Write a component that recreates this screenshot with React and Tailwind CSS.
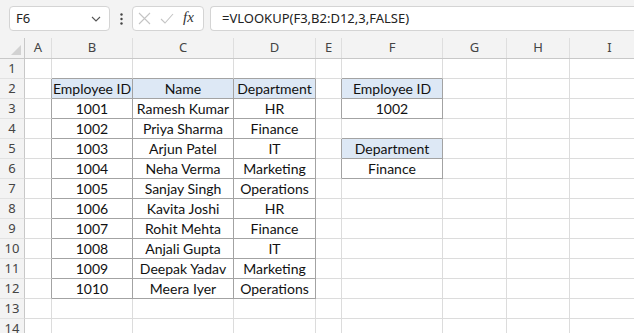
import React from 'react';

const colWidths = 'grid-cols-[25px_27px_81px_101px_82px_26px_101px_64px_63px_80px]';
const letters = ['A', 'B', 'C', 'D', 'E', 'F', 'G', 'H', 'I'];

const employees = [
    ['1001', 'Ramesh Kumar', 'HR'],
    ['1002', 'Priya Sharma', 'Finance'],
    ['1003', 'Arjun Patel', 'IT'],
    ['1004', 'Neha Verma', 'Marketing'],
    ['1005', 'Sanjay Singh', 'Operations'],
    ['1006', 'Kavita Joshi', 'HR'],
    ['1007', 'Rohit Mehta', 'Finance'],
    ['1008', 'Anjali Gupta', 'IT'],
    ['1009', 'Deepak Yadav', 'Marketing'],
    ['1010', 'Meera Iyer', 'Operations'],
];

const cells = {
    B2: 'Employee ID', C2: 'Name', D2: 'Department',
    F2: 'Employee ID', F3: '1002',
    F5: 'Department', F6: 'Finance',
};
employees.forEach((e, i) => {
    cells['B' + (i + 3)] = e[0];
    cells['C' + (i + 3)] = e[1];
    cells['D' + (i + 3)] = e[2];
});

const headerCells = ['B2', 'C2', 'D2', 'F2', 'F5'];

// c: 1 = A ... 9 = I
function inTable(c, r) {
    if (c >= 2 && c <= 4 && r >= 2 && r <= 12) return true;
    if (c === 6 && (r === 2 || r === 3 || r === 5 || r === 6)) return true;
    return false;
}

function Cell({ c, r }) {
    const key = letters[c - 1] + r;
    const darkRight = inTable(c, r) || inTable(c + 1, r);
    const darkBottom = inTable(c, r) || inTable(c, r + 1);
    const fill = headerCells.includes(key) ? 'bg-[#dde8f5]' : 'bg-white';
    return (
        <div
            className={`h-5 border-r border-b flex items-center justify-center overflow-hidden whitespace-nowrap text-[14px] text-[#111] ${fill} ${darkRight ? 'border-r-[#a3a3a3]' : 'border-r-[#dcdcdc]'} ${darkBottom ? 'border-b-[#a3a3a3]' : 'border-b-[#dcdcdc]'}`}
        >
            {cells[key]}
        </div>
    );
}

function Toolbar() {
    return (
        <div className="h-[38px] bg-[#f3f3f3] flex items-start pt-[6px] pl-[9px] gap-0 text-[13px] text-[#222]" style={{ fontFamily: '"Noto Sans", sans-serif' }}>
            <div className="w-[101px] h-[25px] bg-white border border-[#d4d4d4] rounded-[4px] flex items-center justify-between pl-[6px] pr-[8px]">
                <span>F6</span>
                <svg width="10" height="6" viewBox="0 0 10 6" fill="none" stroke="#555" strokeWidth="1.1">
                    <path d="M1 1 L5 5 L9 1" />
                </svg>
            </div>
            <div className="w-[22px] h-[25px] flex items-center justify-center">
                <svg width="3" height="12" viewBox="0 0 3 12" fill="#444">
                    <circle cx="1.5" cy="1.5" r="1.2" />
                    <circle cx="1.5" cy="6" r="1.2" />
                    <circle cx="1.5" cy="10.5" r="1.2" />
                </svg>
            </div>
            <div className="w-[72px] h-[25px] bg-white border border-[#d4d4d4] rounded-[4px] flex items-center pl-[5px] gap-[9px]">
                <svg width="13" height="13" viewBox="0 0 13 13" fill="none" stroke="#c4c4c4" strokeWidth="1.1">
                    <path d="M1 1 L12 12 M12 1 L1 12" />
                </svg>
                <svg width="14" height="11" viewBox="0 0 14 11" fill="none" stroke="#c4c4c4" strokeWidth="1.1">
                    <path d="M1 6 L5 10 L13 1" />
                </svg>
                <span className="italic text-[15px] text-[#333] -mt-[2px]" style={{ fontFamily: '"Liberation Serif", serif' }}>fx</span>
            </div>
            <div className="ml-[6px] flex-1 h-[25px] bg-white border border-[#d4d4d4] border-r-0 rounded-l-[4px] flex items-center pl-[11px]">
                =VLOOKUP(F3,B2:D12,3,FALSE)
            </div>
        </div>
    );
}

function HeaderRow() {
    return (
        <div className={`grid ${colWidths} h-[21px] bg-[#f3f3f3] border-b border-[#c8c8c8] text-[13px] text-[#444]`} style={{ fontFamily: '"Noto Sans", sans-serif' }}>
            <div className="border-r border-[#c8c8c8] flex items-end justify-end pr-[3px] pb-[3px]">
                <svg width="10" height="10" viewBox="0 0 10 10">
                    <path d="M10 0 L10 10 L0 10 Z" fill="#d2d2d2" />
                </svg>
            </div>
            {letters.map((l) => (
                <div key={l} className="border-r border-[#dedede] flex items-center justify-center">
                    {l}
                </div>
            ))}
        </div>
    );
}

export default function App() {
    const rows = Array.from({ length: 14 }, (_, i) => i + 1);
    return (
        <div className="w-[634px] h-[333px] overflow-hidden bg-white">
            <Toolbar />
            <HeaderRow />
            <div style={{ fontFamily: 'Lato, sans-serif' }}>
                {rows.map((r) => (
                    <div key={r} className={`grid ${colWidths}`}>
                        <div className="h-5 bg-[#f3f3f3] border-r border-r-[#c8c8c8] border-b border-b-[#e2e2e2] flex items-center justify-center text-[13px] text-[#444]" style={{ fontFamily: '"Noto Sans", sans-serif' }}>
                            {r}
                        </div>
                        {letters.map((l, i) => (
                            <Cell key={l} c={i + 1} r={r} />
                        ))}
                    </div>
                ))}
            </div>
        </div>
    );
}
